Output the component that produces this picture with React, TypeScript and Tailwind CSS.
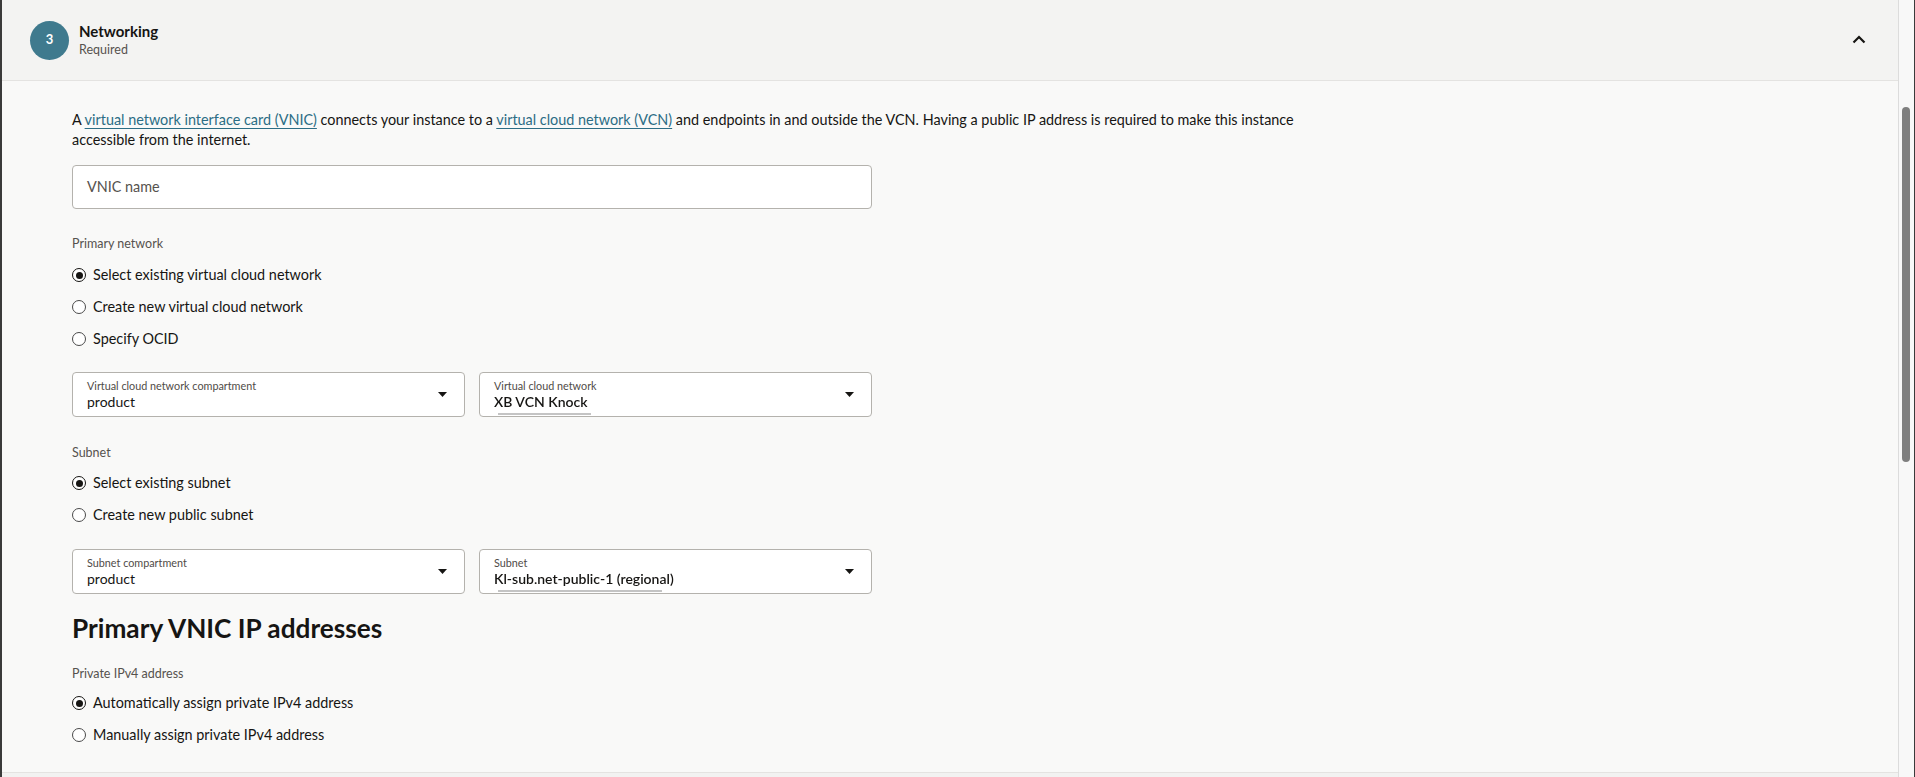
import React from "react";

const font = { fontFamily: "Lato, 'Noto Sans', sans-serif" };

function Radio({ checked, label }: { checked?: boolean; label: string }) {
  return (
    <div className="flex h-[32px] items-center">
      <div
        className={`flex h-[14px] w-[14px] items-center justify-center rounded-full border-[1.5px] ${
          checked ? "border-[#161513]" : "border-[#4a4a4a]"
        } bg-white`}
      >
        {checked && <div className="h-[7px] w-[7px] rounded-full bg-[#161513]" />}
      </div>
      <span className="ml-[7px] text-[14.4px] text-[#161513]">{label}</span>
    </div>
  );
}

function Caret() {
  return (
    <svg width="9" height="5" viewBox="0 0 9 5" className="block">
      <path d="M0 0h9L4.5 5z" fill="#161513" />
    </svg>
  );
}

function Select({
  label,
  value,
  blurred,
  barWidth,
}: {
  label: string;
  value: string;
  blurred?: boolean;
  barWidth?: number;
}) {
  return (
    <div className="relative flex h-[45px] w-[393px] items-center justify-between rounded-[4px] border border-[#b4b2ad] bg-white pl-[14px] pr-[17px]">
      <div className="flex flex-col">
        <span className="text-[10.8px] leading-[14px] text-[#4f4b47]">{label}</span>
        <span
          className={`text-[14px] leading-[18px] text-[#161513] ${blurred ? "font-semibold blur-[0.6px]" : ""}`}
        >
          {value}
        </span>
      </div>
      <Caret />
      {blurred && (
        <div
          className="absolute left-[18px] top-[40px] h-[2px] bg-[#c4c4c4]"
          style={{ width: barWidth }}
        />
      )}
    </div>
  );
}

const linkCls = "text-[#2c6d85] underline decoration-[1px] underline-offset-[3px]";

export default function App() {
  return (
    <div className="flex h-[777px] w-[1915px] overflow-hidden bg-[#f9f9f8]" style={font}>
      <div className="w-[2px] shrink-0 bg-[#3a3a3a]" />
      <div className="flex w-[1897px] shrink-0 flex-col border-r border-[#dcdcdc]">
        {/* Header */}
        <div className="flex h-[81px] shrink-0 items-center border-b border-[#e4e3e1] bg-[#f3f3f2] pl-[28px] pr-[32px]">
          <div className="flex h-[39px] w-[39px] items-center justify-center rounded-full bg-[#3f7a8e] text-[13px] font-bold text-white">
            3
          </div>
          <div className="ml-[10px] flex flex-col">
            <span className="text-[15px] font-bold leading-[20px] text-[#161513]">Networking</span>
            <span className="text-[12.5px] leading-[18px] text-[#56524e]">Required</span>
          </div>
          <div className="flex-1" />
          <svg width="14" height="9" viewBox="0 0 14 9" className="mb-[2px]">
            <path d="M1.5 7.5L7 2l5.5 5.5" stroke="#161513" strokeWidth="2.2" fill="none" />
          </svg>
        </div>

        {/* Body */}
        <div className="flex flex-1 flex-col px-[70px] pt-[29px]">
          <p className="w-[1260px] text-[14.4px] leading-[20px] text-[#161513]">
            <span>A </span>
            <span className={linkCls}>virtual network interface card (VNIC)</span>
            <span> connects your instance to a </span>
            <span className={linkCls}>virtual cloud network (VCN)</span>
            <span>
              {" "}
              and endpoints in and outside the VCN. Having a public IP address is required to make this instance
              accessible from the internet.
            </span>
          </p>

          <div className="mt-[15px] flex h-[44px] w-[800px] items-center rounded-[4px] border border-[#b4b2ad] bg-white pl-[14px]">
            <span className="text-[14.4px] text-[#56524e]">VNIC name</span>
          </div>

          <div className="mt-[27px] text-[12.5px] leading-[16px] text-[#56524e]">Primary network</div>
          <div className="mt-[7px] flex flex-col">
            <Radio checked label="Select existing virtual cloud network" />
            <Radio label="Create new virtual cloud network" />
            <Radio label="Specify OCID" />
          </div>

          <div className="mt-[17px] flex gap-[14px]">
            <Select label="Virtual cloud network compartment" value="product" />
            <Select label="Virtual cloud network" value="XB VCN Knock" blurred barWidth={93} />
          </div>

          <div className="mt-[28px] text-[12.5px] leading-[16px] text-[#56524e]">Subnet</div>
          <div className="mt-[6px] flex flex-col">
            <Radio checked label="Select existing subnet" />
            <Radio label="Create new public subnet" />
          </div>

          <div className="mt-[18px] flex gap-[14px]">
            <Select label="Subnet compartment" value="product" />
            <Select label="Subnet" value="Kl-sub.net-public-1 (regional)" blurred barWidth={164} />
          </div>

          <h2 className="mt-[18px] text-[26.2px] font-bold leading-[32px] text-[#161513]">
            Primary VNIC IP addresses
          </h2>

          <div className="mt-[22px] text-[12.5px] leading-[16px] text-[#56524e]">Private IPv4 address</div>
          <div className="mt-[5px] flex flex-col">
            <Radio checked label="Automatically assign private IPv4 address" />
            <Radio label="Manually assign private IPv4 address" />
          </div>
        </div>

        <div className="h-[5px] shrink-0 border-t border-[#e4e3e1] bg-[#f2f2f1]" />
      </div>

      {/* Scrollbar */}
      <div className="relative w-[15px] shrink-0 bg-[#f8f8f8]">
        <div className="absolute left-[3px] top-[107px] h-[355px] w-[8px] rounded-full bg-[#7f7f7f]" />
      </div>
      <div className="w-[1px] shrink-0 bg-[#3a3a3a]" />
    </div>
  );
}
